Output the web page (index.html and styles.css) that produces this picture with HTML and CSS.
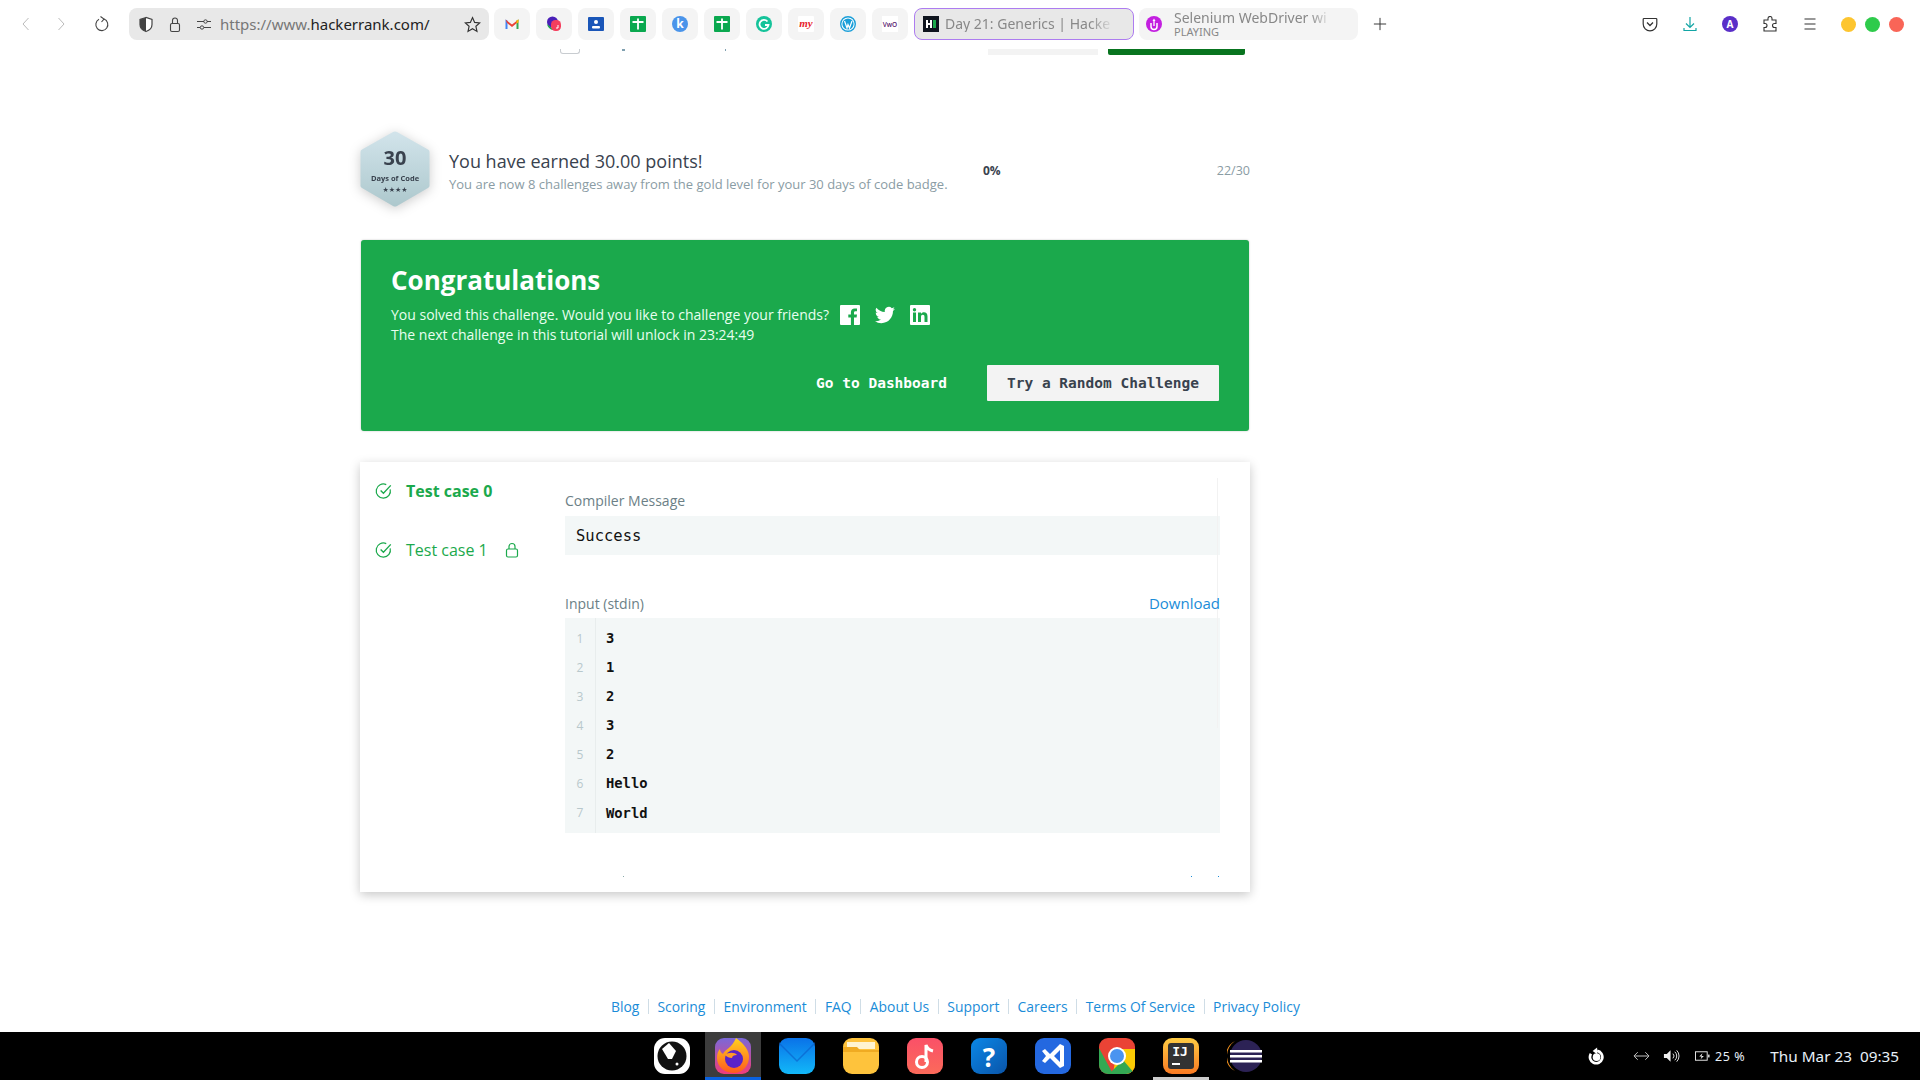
FILE: index.html
```html
<!DOCTYPE html>
<html lang="en">
<head>
<meta charset="utf-8">
<title>Day 21: Generics | HackerRank</title>
<link rel="stylesheet" href="styles.css">
</head>
<body>
<header class="chrome">
  <div class="nav">
    <svg class="nav-ic" viewBox="0 0 16 16"><path d="M10.5 2 5 8l5.500 6" fill="none" stroke="#bbb" stroke-width="1"/></svg>
    <svg class="nav-ic" viewBox="0 0 16 16"><path d="M5.500 2 11 8l-5.500 6" fill="none" stroke="#bbb" stroke-width="1"/></svg>
    <svg class="nav-ic nav-reload" viewBox="0 0 16 16"><path d="M10 3A6 6 0 1 1 5 3.300" fill="none" stroke="#444" stroke-width="1.100"/><path d="M6.500.5 10 3 7.500 6" fill="none" stroke="#444" stroke-width="1.100"/></svg>
  </div>
  <div class="url">
    <svg class="u-ic" viewBox="0 0 16 16"><path d="M8 1 2 3v5c0 3.500 3 6 6 7 3-1 6-3.500 6-7V3z" fill="#fff" stroke="#444" stroke-width="1.200"/><path d="M8 1 2 3v5c0 3.500 3 6 6 7z" fill="#444"/></svg>
    <svg class="u-ic" viewBox="0 0 16 16"><rect x="3.500" y="7" width="9" height="8" rx="1.500" fill="none" stroke="#444" stroke-width="1.100"/><path d="M5.500 7V4a2.500 2.500 0 0 1 5 0v3" fill="none" stroke="#444" stroke-width="1.100"/></svg>
    <svg class="u-ic" viewBox="0 0 16 16"><path d="M1 5h7M11 5h4M1 11h3M8 11h7" stroke="#444" fill="none"/><circle cx="9.500" cy="5" r="1.700" fill="none" stroke="#444"/><circle cx="6" cy="11" r="1.700" fill="none" stroke="#444"/></svg>
    <div class="url-text"><span class="dim">https://www.</span>hackerrank.com/</div>
    <svg class="u-star" viewBox="0 0 16 16"><path d="M8 1.500 10 6l4.800.5-3.600 3.200 1 4.800L8 12l-4.200 2.500 1-4.800L1.200 6.500 6 6z" fill="none" stroke="#333" stroke-width="1.100"/></svg>
  </div>
  <div class="pins">
    <div class="pin"><svg viewBox="0 0 16 16"><path d="M1.500 13V3.500l2 1V13z" fill="#4285f4"/><path d="M12.500 13V4.500l2-1V13z" fill="#34a853"/><path d="M1.500 3.500 8 8.500l6.500-5-1 3L8 11 3 7z" fill="#ea4335"/><path d="m12.500 4.500 2-1v3l-2 1z" fill="#fbbc04"/></svg></div>
    <div class="pin"><svg viewBox="0 0 16 16"><circle cx="6.500" cy="6" r="5.500" fill="#4a1fb8"/><path d="M1 8c1 4 4 6 7 6z" fill="#16a34a"/><rect x="5" y="4" width="10" height="11" rx="4.500" fill="#f43f5e"/><path d="M10 12h2v-3" stroke="#fff" fill="none"/></svg></div>
    <div class="pin"><svg viewBox="0 0 16 16"><rect width="16" height="14" y="1" rx="1" fill="#1a56b8"/><circle cx="8" cy="6" r="2" fill="#fff"/><rect x="4" y="10" width="8" height="2.500" rx="1" fill="#fff"/></svg></div>
    <div class="pin"><svg viewBox="0 0 16 16"><rect width="16" height="16" rx="1" fill="#0aa84f"/><path d="M2.500 6h11M8 2.500v11" stroke="#fff" stroke-width="1.800"/></svg></div>
    <div class="pin"><svg viewBox="0 0 16 16"><circle cx="8" cy="8" r="8" fill="#4a94ea"/><text x="8" y="12" class="fav-k">k</text></svg></div>
    <div class="pin"><svg viewBox="0 0 16 16"><rect width="16" height="16" rx="1" fill="#0aa84f"/><path d="M2.500 6h11M8 2.500v11" stroke="#fff" stroke-width="1.800"/></svg></div>
    <div class="pin"><svg viewBox="0 0 16 16"><circle cx="8" cy="8" r="8" fill="#15c39a"/><path d="M11.500 5.500A4.500 4.500 0 1 0 12.500 9H9" fill="none" stroke="#fff" stroke-width="1.800"/></svg></div>
    <div class="pin"><svg viewBox="0 0 16 16"><rect width="16" height="16" rx="1" fill="#fff"/><text x="8" y="11" class="fav-my">my</text></svg></div>
    <div class="pin"><svg viewBox="0 0 16 16"><circle cx="8" cy="8" r="7.300" fill="#fff" stroke="#1a9ed8" stroke-width="1.400"/><circle cx="8" cy="8" r="5.600" fill="#1a9ed8"/><path d="m4.500 5 2.500 7 1-3.500L9.500 12 12 5" fill="none" stroke="#fff" stroke-width="1.200"/></svg></div>
    <div class="pin"><svg viewBox="0 0 16 16"><rect width="16" height="16" fill="#fff"/><text x="8" y="10.500" class="fav-vwo">VwO</text></svg></div>
  </div>
  <div class="tab tab-active">
    <svg class="tab-ic" viewBox="0 0 16 16"><rect width="16" height="16" fill="#0e141e"/><rect x="3" y="4" width="2" height="8" fill="#fff"/><rect x="5" y="7" width="2" height="2" fill="#fff"/><rect x="7" y="4" width="2" height="8" fill="#fff"/><rect x="10" y="4" width="3" height="8" fill="#1ba94c"/></svg>
    <span class="tab-title">Day 21: Generics | Hacke</span>
  </div>
  <div class="tab tab-media">
    <svg class="tab-ic" viewBox="0 0 16 16"><circle cx="8" cy="8" r="8" fill="#c31fe0"/><path d="M5 7v3.500a3 3 0 0 0 6 0V7" fill="none" stroke="#fff" stroke-width="1.500"/><path d="M8 2.500 6.500 5h3z" fill="#fff"/><path d="M8 5v5" stroke="#fff" stroke-width="1.300"/></svg>
    <div class="tab-stack">
      <span class="tab-title">Selenium WebDriver wi</span>
      <span class="tab-sub">PLAYING</span>
    </div>
  </div>
  <svg class="plus" viewBox="0 0 16 16"><path d="M8 1v14M1 8h14" stroke="#333" stroke-width="1.100"/></svg>
  <div class="tools">
    <svg class="tool" viewBox="0 0 16 16"><path d="M2 2.500h12a.8.8 0 0 1 .8.8V8a6.800 6.800 0 0 1-13.600 0V3.300a.8.8 0 0 1 .8-.8z" fill="none" stroke="#333" stroke-width="1.200"/><path d="m5 6.500 3 3 3-3" fill="none" stroke="#333" stroke-width="1.300"/></svg>
    <svg class="tool" viewBox="0 0 16 16"><path d="M8 1v10M4 7.500l4 4 4-4M2 12v2.500h12V12" fill="none" stroke="#12a5a5" stroke-width="1.200"/></svg>
    <div class="avatar">A</div>
    <svg class="tool" viewBox="0 0 16 16"><path d="M6 2.500a2 2 0 0 1 4 0V4h4v3.500h-1.500a2 2 0 0 0 0 4H14V15H2v-3.500h1a2 2 0 0 0 0-4H2V4h4z" fill="none" stroke="#333" stroke-width="1.100"/></svg>
    <svg class="tool" viewBox="0 0 16 16"><path d="M2.500 3h11M2.500 8h11M2.500 13h11" stroke="#333" stroke-width="1.200"/></svg>
  </div>
  <div class="lights">
    <span class="light l-y"></span><span class="light l-g"></span><span class="light l-r"></span>
  </div>
</header>

<main class="page">
  <div class="strip">
    <span class="strip-check"></span>
    <span class="strip-speck strip-speck-a"></span>
    <span class="strip-speck strip-speck-b"></span>
    <span class="strip-btn-gray"></span>
    <span class="strip-btn-green"></span>
  </div>

  <section class="summary">
    <div class="badge">
      <svg class="badge-hex" viewBox="0 0 70 76"><defs><linearGradient id="hexg" x1="0" y1="0" x2="0" y2="1"><stop offset="0" stop-color="#d2e4eb"/><stop offset="1" stop-color="#adc8cd"/></linearGradient></defs><path d="M33 1a4 4 0 0 1 4 0l31 17.500a3 3 0 0 1 1.500 3V54a3 3 0 0 1-1.500 3L37 75a4 4 0 0 1-4 0L2 57a3 3 0 0 1-1.500-3V21.500a3 3 0 0 1 1.500-3z" fill="url(#hexg)"/></svg>
      <div class="badge-text">
        <span class="badge-num">30</span>
        <span class="badge-label">Days of Code</span>
        <span class="badge-stars">★★★★</span>
      </div>
    </div>
    <div class="summary-text">
      <div class="earned">You have earned 30.00 points!</div>
      <div class="away">You are now 8 challenges away from the gold level for your 30 days of code badge.</div>
    </div>
    <b class="percent">0%</b>
    <span class="progress-count">22/30</span>
  </section>

  <section class="banner">
    <h2 class="banner-title">Congratulations</h2>
    <div class="banner-line banner-first">
      <span>You solved this challenge. Would you like to challenge your friends?</span>
      <svg class="social" viewBox="0 0 20 20"><path fill="#fff" d="M1 0h18a1 1 0 0 1 1 1v18a1 1 0 0 1-1 1h-5v-7.500h2.600l.4-3h-3V7.700c0-.9.300-1.500 1.500-1.500H17V3.500c-.3 0-1.200-.1-2.300-.1-2.300 0-3.800 1.400-3.800 3.900v2.200H8.300v3h2.600V20H1a1 1 0 0 1-1-1V1a1 1 0 0 1 1-1z"/></svg>
      <svg class="social" viewBox="0 0 24 24"><path fill="#fff" d="M23.950 4.570a10 10 0 0 1-2.820.77 4.960 4.960 0 0 0 2.160-2.720 9.900 9.900 0 0 1-3.120 1.180 4.920 4.920 0 0 0-8.380 4.480A13.950 13.950 0 0 1 1.640 3.160a4.920 4.920 0 0 0 1.520 6.570 4.900 4.900 0 0 1-2.230-.61v.06a4.920 4.920 0 0 0 3.950 4.830 5 5 0 0 1-2.210.08 4.940 4.940 0 0 0 4.600 3.420A9.870 9.870 0 0 1 0 19.540a13.940 13.940 0 0 0 7.550 2.210c9.050 0 14-7.500 14-13.980 0-.21 0-.42-.02-.63a9.940 9.940 0 0 0 2.420-2.570z"/></svg>
      <svg class="social" viewBox="0 0 20 20"><path fill="#fff" fill-rule="evenodd" d="M1 0h18a1 1 0 0 1 1 1v18a1 1 0 0 1-1 1H1a1 1 0 0 1-1-1V1a1 1 0 0 1 1-1zm2 7.500V17h3V7.500zM4.500 3a1.700 1.700 0 1 0 0 3.400 1.700 1.700 0 0 0 0-3.400zM8 7.500V17h3v-5c0-1.300.6-2.200 1.800-2.200s1.700.9 1.700 2.200v5h3v-5.600c0-2.700-1.400-4.100-3.500-4.100-1.400 0-2.400.7-3 1.600V7.500z"/></svg>
    </div>
    <div class="banner-line">The next challenge in this tutorial will unlock in 23:24:49</div>
    <div class="banner-actions">
      <a class="btn-link">Go to Dashboard</a>
      <a class="btn-light">Try a Random Challenge</a>
    </div>
  </section>

  <section class="card">
    <nav class="cases">
      <div class="case case-on">
        <svg class="case-ic" viewBox="0 0 16 16"><path d="M13.500 6.500A6.300 6.300 0 1 1 10 2.300" fill="none" stroke="#1ba94c" stroke-width="1.100"/><path d="m5 7.500 2.500 2.500L14 3" fill="none" stroke="#1ba94c" stroke-width="1.200"/></svg>
        <span>Test case 0</span>
      </div>
      <div class="case">
        <svg class="case-ic" viewBox="0 0 16 16"><path d="M13.500 6.500A6.300 6.300 0 1 1 10 2.300" fill="none" stroke="#1ba94c" stroke-width="1.100"/><path d="m5 7.500 2.500 2.500L14 3" fill="none" stroke="#1ba94c" stroke-width="1.200"/></svg>
        <span>Test case 1</span>
        <svg class="case-lock" viewBox="0 0 16 16"><rect x="2.500" y="7" width="11" height="8" rx="1.500" fill="none" stroke="#1ba94c" stroke-width="1.200"/><path d="M5 7V4.500a3 3 0 0 1 6 0V7" fill="none" stroke="#1ba94c" stroke-width="1.200"/></svg>
      </div>
    </nav>
    <div class="result">
      <div class="field-label">Compiler Message</div>
      <div class="message">Success</div>
      <div class="input-head">
        <span class="field-label">Input (stdin)</span>
        <a class="download">Download</a>
      </div>
      <div class="code">
        <div class="gutter"><span>1</span><span>2</span><span>3</span><span>4</span><span>5</span><span>6</span><span>7</span></div>
        <div class="lines"><span>3</span><span>1</span><span>2</span><span>3</span><span>2</span><span>Hello</span><span>World</span></div>
      </div>
      <div class="specks"><i class="speck speck-gray"></i><i class="speck speck-blue"></i><i class="speck speck-blue speck-last"></i></div>
    </div>
  </section>

  <footer class="links">
    <a>Blog</a><a>Scoring</a><a>Environment</a><a>FAQ</a><a>About Us</a><a>Support</a><a>Careers</a><a>Terms Of Service</a><a>Privacy Policy</a>
  </footer>
</main>

<footer class="taskbar">
  <div class="dock">
    <div class="dock-item dock-first">
      <svg class="dock-ic" viewBox="0 0 36 36"><rect x="0" y="0" width="36" height="36" rx="11" fill="#fff"/><circle cx="18" cy="18" r="14.500" fill="#111"/><path d="M8 11 15 5l7 8-4 8h-4z" fill="#fff"/><circle cx="23" cy="26" r="1.500" fill="#fff"/></svg>
    </div>
    <div class="dock-item dock-active">
      <svg class="dock-ic" viewBox="0 0 36 36"><defs><linearGradient id="ffb" x1="0" y1="0" x2="0" y2="1"><stop offset="0" stop-color="#7a68d8"/><stop offset="1" stop-color="#f03c7a"/></linearGradient><linearGradient id="fff" x1="0" y1="0" x2="0" y2="1"><stop offset="0" stop-color="#ffd21e"/><stop offset="1" stop-color="#ff5a1e"/></linearGradient></defs><rect width="36" height="36" rx="9" fill="url(#ffb)"/><path d="M21 0c5 4 12 9 13 18 .5 9-6 17-15 17C10 35 2 29 2 20c0-4 1-7 3-9 0 2 1 4 3 5 2-5 9-6 13-16z" fill="url(#fff)"/><circle cx="19" cy="21" r="9" fill="#5a22c8"/><path d="M10 17c3-3 10-3 12 0-3 0-5 1-5 3-3 0-5-1-7-3z" fill="#ff9a2a"/></svg>
    </div>
    <div class="dock-item">
      <svg class="dock-ic" viewBox="0 0 36 36"><defs><linearGradient id="mail" x1="0" y1="0" x2="0" y2="1"><stop offset="0" stop-color="#0a72e8"/><stop offset="1" stop-color="#12b8f8"/></linearGradient></defs><rect width="36" height="36" rx="9" fill="url(#mail)"/><path d="M0 4 18 22 36 4v2L18 24 0 6z" fill="#0a5cc8" opacity=".6"/></svg>
    </div>
    <div class="dock-item">
      <svg class="dock-ic" viewBox="0 0 36 36"><rect width="36" height="36" rx="9" fill="#fec33c"/><path d="M4 4h28v7H4z" fill="#fff4d0"/><path d="M0 9h14l3 3h19v2H0z" fill="#f0ab22"/></svg>
    </div>
    <div class="dock-item">
      <svg class="dock-ic" viewBox="0 0 36 36"><defs><linearGradient id="music" x1="0" y1="0" x2="0" y2="1"><stop offset="0" stop-color="#fa5068"/><stop offset="1" stop-color="#fb6a5a"/></linearGradient></defs><rect width="36" height="36" rx="9" fill="url(#music)"/><circle cx="15" cy="24" r="5.500" fill="none" stroke="#fff" stroke-width="3"/><path d="M19 24V7c1 3 3 5 7 6" fill="none" stroke="#fff" stroke-width="3"/></svg>
    </div>
    <div class="dock-item">
      <svg class="dock-ic" viewBox="0 0 36 36"><defs><linearGradient id="help" x1="0" y1="0" x2="1" y2="1"><stop offset="0" stop-color="#0a88e8"/><stop offset="1" stop-color="#0a54a8"/></linearGradient></defs><rect width="36" height="36" rx="9" fill="url(#help)"/><text x="18" y="29" class="dock-q">?</text></svg>
    </div>
    <div class="dock-item">
      <svg class="dock-ic" viewBox="0 0 36 36"><rect width="36" height="36" rx="9" fill="#2468e0"/><path d="M25 6 13 18l12 12 4-2V8zM25 12l-6 6 6 6z" fill="#fff" fill-rule="evenodd"/><path d="M7 13l3-2 7 7-7 7-3-2 4-5z" fill="#fff"/></svg>
    </div>
    <div class="dock-item">
      <svg class="dock-ic" viewBox="0 0 36 36"><defs><clipPath id="cr"><rect width="36" height="36" rx="9"/></clipPath></defs><g clip-path="url(#cr)"><rect width="36" height="36" fill="#ea4335"/><path d="M0 10 14 36H0z" fill="#34a853"/><path d="M18 11h18v25H14z" fill="#fbcb04"/><path d="m10 36 14-14 12 14z" fill="#34a853"/></g><circle cx="18" cy="18" r="9" fill="#fff"/><circle cx="18" cy="18" r="7" fill="#4a94f0"/></svg>
    </div>
    <div class="dock-item dock-running">
      <svg class="dock-ic" viewBox="0 0 36 36"><defs><linearGradient id="ij" x1="0" y1="0" x2="0" y2="1"><stop offset="0" stop-color="#fecc44"/><stop offset="1" stop-color="#fa7a22"/></linearGradient></defs><rect width="36" height="36" rx="9" fill="url(#ij)"/><rect x="5" y="5" width="26" height="26" rx="3" fill="#333"/><text x="17" y="18" class="dock-ij">IJ</text><rect x="9" y="25" width="8" height="2" fill="#fff"/></svg>
    </div>
    <div class="dock-item">
      <svg class="dock-ic" viewBox="0 0 36 36"><circle cx="19" cy="18" r="16" fill="#2c2255"/><path d="M8 3A17 17 0 0 0 8 33 18 18 0 0 1 8 3z" fill="#f7941e"/><path d="M3 12h32v2.500H3zM3 17h32v2.500H3zM3 22h32v2.500H3z" fill="#fff"/></svg>
    </div>
  </div>
  <div class="tray">
    <svg class="tray-power" viewBox="0 0 16 16"><path d="M9 .5 5 3.500 9 6.500z" fill="#fff"/><path d="M9 3.500A5.500 5.500 0 1 1 3.500 6" fill="none" stroke="#fff" stroke-width="2.400"/><circle cx="8.500" cy="9" r="3.400" fill="#fff"/></svg>
    <svg class="tray-arrows" viewBox="0 0 18 12"><path d="M5 2 1 6l4 4M13 2l4 4-4 4M2 6h14" fill="none" stroke="#ccc"/></svg>
    <svg class="tray-vol" viewBox="0 0 18 14"><path d="M1 5h3l4-4v12L4 9H1z" fill="#eee"/><path d="M10.500 4.500a3.500 3.500 0 0 1 0 5M12.500 2.500a6 6 0 0 1 0 9M14.500 1a8.500 8.500 0 0 1 0 12" fill="none" stroke="#eee"/></svg>
    <svg class="tray-bat" viewBox="0 0 16 12"><rect x=".5" y="1.500" width="12.500" height="9" fill="none" stroke="#eee"/><rect x="14" y="4.500" width="1.500" height="3" fill="#eee"/><path d="M8 3 4.500 6.500H7L6 9.500l3.500-3.500H7z" fill="#eee"/></svg>
    <span class="tray-pct">25 %</span>
    <span class="tray-clock">Thu Mar 23&nbsp; 09:35</span>
  </div>
</footer>
</body>
</html>
```

FILE: styles.css
```css
* { box-sizing: border-box; }
html, body { margin: 0; height: 100%; }
body {
  width: 1920px; height: 1080px; overflow: hidden;
  display: flex; flex-direction: column;
  background: #fff; color: #39424e;
  font-family: "Open Sans", "Noto Sans", sans-serif;
}
a { text-decoration: none; }

/* Browser chrome */
.chrome {
  height: 49px; flex: none; display: flex; align-items: center;
  padding: 0 0 1px 18px; background: #fff;
  font-family: "Noto Sans", sans-serif;
}
.nav { display: flex; gap: 19px; width: 111px; align-items: center; }
.nav-ic { width: 16px; height: 16px; }
.nav-reload { margin-left: 6px; }
.url {
  width: 360px; height: 32px; border-radius: 8px; background: #e8e8e8;
  display: flex; align-items: center; padding: 0 8px 0 9px; gap: 13px;
}
.u-ic { width: 16px; height: 17px; flex: none; }
.url-text {
  margin-left: -5px; white-space: nowrap;
  font-size: 15px; color: #222;
}
.dim { color: #777; }
.u-star { width: 17px; height: 17px; margin-left: auto; flex: none; }
.pins { display: flex; gap: 6px; margin-left: 5px; }
.pin {
  width: 36px; height: 32px; border-radius: 8px; background: #f4f4f4;
  display: flex; align-items: center; justify-content: center;
}
.pin svg { width: 16px; height: 16px; }
.fav-k { font: 700 12px "Open Sans", sans-serif; fill: #fff; text-anchor: middle; }
.fav-my { font: italic 700 11px "Liberation Serif", serif; fill: #e81c2c; text-anchor: middle; }
.fav-vwo { font: 600 6.500px "Open Sans", sans-serif; fill: #5a2070; text-anchor: middle; }
.tab {
  height: 32px; border-radius: 8px; display: flex; align-items: center;
  gap: 6px; padding: 0 8px; white-space: nowrap; color: #888; font-size: 14px;
}
.tab-active { width: 220px; margin-left: 6px; background: #e8e8e8; border: 1.500px solid #ad7cf0; }
.tab-media { width: 219px; margin-left: 5px; background: #f4f4f4; padding-left: 7px; gap: 12px; }
.tab-ic { width: 16px; height: 16px; flex: none; }
.tab-title {
  display: block; font-size: 14px; line-height: 16px; padding-right: 4px;
  -webkit-mask-image: linear-gradient(90deg, #000 86%, transparent);
  mask-image: linear-gradient(90deg, #000 86%, transparent);
}
.tab-stack { width: 158px; display: flex; flex-direction: column; }
.tab-sub { font-size: 11px; line-height: 12px; color: #888; }
.plus { width: 14px; height: 14px; margin-left: 15px; flex: none; }
.tools { display: flex; align-items: center; gap: 24px; margin-left: 255px; }
.tool { width: 16px; height: 16px; }
.avatar {
  width: 16px; height: 16px; border-radius: 50%; background: #5a2fc8; color: #fff;
  font: 700 10px/16px "Noto Sans", sans-serif; text-align: center;
}
.lights { display: flex; gap: 9px; margin-left: 23px; }
.light { width: 15px; height: 15px; border-radius: 50%; }
.l-y { background: #fdc52f; }
.l-g { background: #2ecb4b; }
.l-r { background: #f96557; }

/* Page */
.page { flex: 1; min-height: 0; padding-left: 360px; display: flex; flex-direction: column; }
.strip { height: 6px; flex: none; display: flex; align-items: flex-start; margin-left: 200px; overflow: hidden; }
.strip-check { width: 20px; height: 5px; border: 1px solid #c8ccd0; border-top: 0; border-radius: 0 0 3px 3px; }
.strip-speck { width: 3px; height: 2px; background: #80a0b0; }
.strip-speck-a { margin-left: 42px; }
.strip-speck-b { margin-left: 100px; width: 1px; }
.strip-btn-gray { width: 110px; height: 6px; margin-left: 262px; background: #f3f3f3; }
.strip-btn-green { width: 137px; height: 6px; margin-left: 10px; background: #08741f; border-radius: 0 0 2px 2px; }

.summary { width: 890px; height: 76px; margin-top: 76px; display: flex; align-items: center; flex: none; }
.badge { width: 70px; height: 76px; position: relative; flex: none; filter: drop-shadow(0 2px 6px rgba(0,0,0,.2)); }
.badge-hex { width: 70px; height: 76px; display: block; }
.badge-text {
  position: absolute; inset: 0; display: flex; flex-direction: column; align-items: center;
  padding-top: 15px; color: #39424e; text-align: center;
}
.badge-num { font-size: 20px; font-weight: 700; line-height: 24px; }
.badge-label { font-size: 7.500px; font-weight: 700; line-height: 10px; margin-top: 3px; white-space: nowrap; }
.badge-stars { font-size: 7px; line-height: 8px; margin-top: 3px; font-family: "DejaVu Sans", sans-serif; }
.summary-text { margin-left: 19px; width: 534px; align-self: flex-start; padding-top: 18px; }
.earned { font-size: 18px; line-height: 24px; color: #39424e; }
.away { font-size: 13px; line-height: 18px; margin-top: 1.500px; color: #8a9ca4; white-space: nowrap; }
.percent { font-size: 12px; color: #39424e; margin-top: 2px; }
.progress-count { margin-left: auto; font-size: 12.500px; color: #8a9ca4; margin-top: 2px; }

.banner {
  width: 888px; height: 191px; margin: 33px 0 0 1px; flex: none; padding: 22px 30px 0;
  background: #1ba94c; border-radius: 3px; color: #e8fff0; box-shadow: 0 0 2px rgba(0,0,0,.25);
  font-size: 14px; line-height: 20px;
}
.banner-title { margin: 0 0 7px; font-size: 26px; line-height: 36px; font-weight: 700; color: #fff; }
.banner-line { height: 19.500px; white-space: nowrap; }
.banner-first { display: flex; align-items: center; }
.social { width: 20px; height: 20px; margin-left: 15px; margin-top: 1px; }
.social:first-of-type { margin-left: 11px; }
.banner-actions { display: flex; justify-content: flex-end; align-items: center; margin-top: 21px; font: 700 14.500px "DejaVu Sans Mono", monospace; }
.btn-link { color: #fff; margin-right: 40px; }
.btn-light {
  width: 232px; height: 36px; background: #f3f3f3; color: #39424e; border-radius: 1px;
  display: flex; align-items: center; justify-content: center;
}

.card {
  width: 890px; height: 430px; margin-top: 31px; flex: none; background: #fff; display: flex;
  box-shadow: 0 3px 10px rgba(0,0,0,.22);
}
.cases { width: 205px; flex: none; padding: 17px 0 0 15px; color: #1ba94c; font-size: 16px; }
.case { display: flex; align-items: center; height: 24px; margin-bottom: 35px; gap: 13px; font-size: 16px; }
.case-on { font-weight: 700; }
.case-ic { width: 18px; height: 18px; flex: none; margin-top: -1px; }
.case-lock { width: 16px; height: 16px; margin-left: 3px; }
.result { width: 655px; padding-top: 29px; position: relative; }
.result::after {
  content: ""; position: absolute; right: 2px; top: 16px; width: 1px; height: 250px; background: #f2f2f2;
}
.field-label { font-size: 14px; line-height: 20px; color: #6c7f86; }
.message {
  height: 39px; margin-top: 5px; padding: 1px 0 0 11px; background: #f3f7f7; color: #111;
  font: 15.500px/39px "DejaVu Sans Mono", monospace;
}
.input-head { display: flex; justify-content: space-between; align-items: center; margin-top: 39px; height: 20px; }
.download { font-size: 15px; color: #1a8cd8; margin-top: -2px; position: relative; z-index: 1; }
.code {
  height: 215px; margin-top: 4px; background: #f3f7f7; display: flex;
  font: 700 13.800px/29.100px "DejaVu Sans Mono", monospace; color: #111;
}
.gutter {
  width: 31px; padding-top: 5.500px; border-right: 1px solid #e8eded; display: flex; flex-direction: column; align-items: center;
  color: #b8c8cc; font: 400 12px/29.100px "Open Sans", sans-serif;
}
.lines { display: flex; flex-direction: column; padding: 6px 0 0 10px; }
.specks { display: flex; margin-top: 43px; height: 1px; padding-left: 58px; }
.speck { width: 1px; height: 1px; }
.speck-gray { background: #8aa; }
.speck-blue { background: #1a8cd8; margin-left: 567px; }
.speck-blue.speck-last { margin-left: 26px; }

.links { display: flex; width: 720px; margin: 104px 0 0 251px; font-size: 13.900px; line-height: 20px; }
.links a { color: #1a8cd8; white-space: nowrap; padding: 0 8.550px; border-left: 1px solid #cfdde6; line-height: 15px; margin-top: 3px; }
.links a:first-child { border-left: 0; padding-left: 0; }

/* Taskbar */
.taskbar {
  height: 48px; flex: none; background: #000; display: flex; align-items: center;
  font-family: "Noto Sans", sans-serif; color: #e8f0f8;
}
.dock { display: flex; margin-left: 642px; height: 48px; gap: 8px; }
.dock-item { width: 56px; height: 48px; display: flex; align-items: center; justify-content: center; position: relative; }
.dock-first { width: 55px; padding-left: 5px; }
.dock-active { background: #3c3c3c; }
.dock-active::after, .dock-running::after {
  content: ""; position: absolute; left: 0; right: 0; bottom: 0; height: 3px; background: #0a62e0;
}
.dock-running::after { background: #ccc; }
.dock-ic { width: 36px; height: 36px; }
.dock-q { font: 700 26px "Open Sans", sans-serif; fill: #fff; text-anchor: middle; }
.dock-ij { font: 700 13px "DejaVu Sans Mono", monospace; fill: #fff; text-anchor: middle; }
.tray { margin-left: auto; padding-right: 21px; display: flex; align-items: center; }
.tray-power { width: 18px; height: 18px; }
.tray-arrows { width: 17px; height: 12px; margin-left: 28px; }
.tray-vol { width: 17px; height: 14px; margin-left: 13px; }
.tray-bat { width: 15px; height: 12px; margin-left: 15px; }
.tray-pct { font-size: 12.500px; margin-left: 5px; letter-spacing: .6px; }
.tray-clock { font-size: 15.300px; margin-left: 25px; white-space: nowrap; }
```
